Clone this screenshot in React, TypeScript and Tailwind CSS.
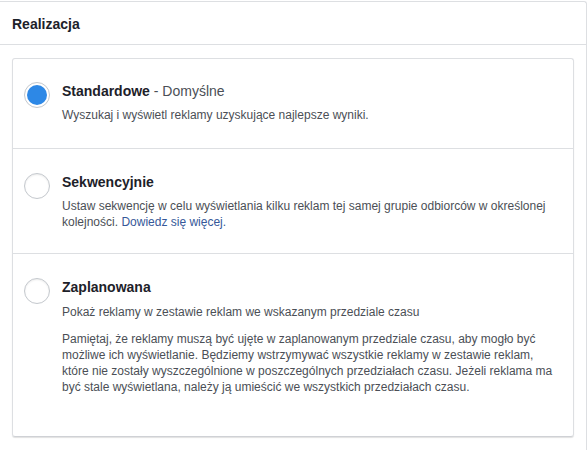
import React from "react";

function Radio({ checked }: { checked?: boolean }) {
  return (
    <div
      className={
        "w-[26px] h-[26px] shrink-0 rounded-full border border-[#c4c8cd] bg-white flex items-center justify-center " +
        (checked ? "" : "shadow-[inset_0_1px_2px_rgba(0,0,0,0.08)]")
      }
    >
      {checked ? <div className="w-[20px] h-[20px] rounded-full bg-[#2d88e6]" /> : null}
    </div>
  );
}

export default function App() {
  return (
    <div className="bg-white w-[587px] h-[451px] overflow-hidden pt-px" style={{ fontFamily: '"Liberation Sans", Arial, sans-serif' }}>
      <div className="border-t border-r border-[#dddfe2] rounded-tr-[3px]">
        <div className="h-[43px] pl-[12px] pt-[2px] flex items-center border-b border-[#dddfe2]">
          <span className="text-[14px] leading-[18px] font-bold text-[#1d2129]">Realizacja</span>
        </div>
        <div className="pt-[13px] pl-[12px] pr-[12px] pb-[13px]">
          <div className="border border-[#dddfe2] border-b-[#cfd1d5] rounded-[3px] shadow-[0_1px_1px_rgba(0,0,0,0.12)]">
            <div className="flex pl-[11px] pr-[10px] pt-[23px] pb-[25px] border-b border-[#dddfe2]">
              <Radio checked />
              <div className="ml-[12px] flex-1">
                <div className="text-[14px] leading-[18px] text-[#1d2129]">
                  <span className="font-bold">Standardowe</span>
                  <span className="text-[#4b4f56]"> - Domyślne</span>
                </div>
                <div className="mt-[7px] text-[12px] leading-[16px] text-[#4b4f56]">
                  Wyszukaj i wyświetl reklamy uzyskujące najlepsze wyniki.
                </div>
              </div>
            </div>
            <div className="flex pl-[11px] pr-[10px] pt-[24px] pb-[23px] border-b border-[#dddfe2]">
              <Radio />
              <div className="ml-[12px] flex-1">
                <div className="text-[14px] leading-[18px] font-bold text-[#1d2129]">Sekwencyjnie</div>
                <p className="mt-[7px] text-[12px] leading-[16px] text-[#4b4f56]">
                  Ustaw sekwencję w celu wyświetlania kilku reklam tej samej grupie odbiorców w określonej kolejności.{" "}
                  <a className="text-[#365899]">Dowiedz się więcej.</a>
                </p>
              </div>
            </div>
            <div className="flex pl-[11px] pr-[10px] pt-[24px] pb-[41px]">
              <Radio />
              <div className="ml-[12px] flex-1">
                <div className="text-[14px] leading-[18px] font-bold text-[#1d2129]">Zaplanowana</div>
                <div className="mt-[8px] text-[12px] leading-[16px] text-[#4b4f56]">
                  Pokaż reklamy w zestawie reklam we wskazanym przedziale czasu
                </div>
                <div className="mt-[11px] text-[12px] leading-[16px] text-[#4b4f56]">
                  Pamiętaj, że reklamy muszą być ujęte w zaplanowanym przedziale czasu, aby mogło być możliwe ich wyświetlanie. Będziemy wstrzymywać wszystkie reklamy w zestawie reklam, które nie zostały wyszczególnione w poszczególnych przedziałach czasu. Jeżeli reklama ma być stale wyświetlana, należy ją umieścić we wszystkich przedziałach czasu.
                </div>
              </div>
            </div>
          </div>
        </div>
      </div>
    </div>
  );
}
